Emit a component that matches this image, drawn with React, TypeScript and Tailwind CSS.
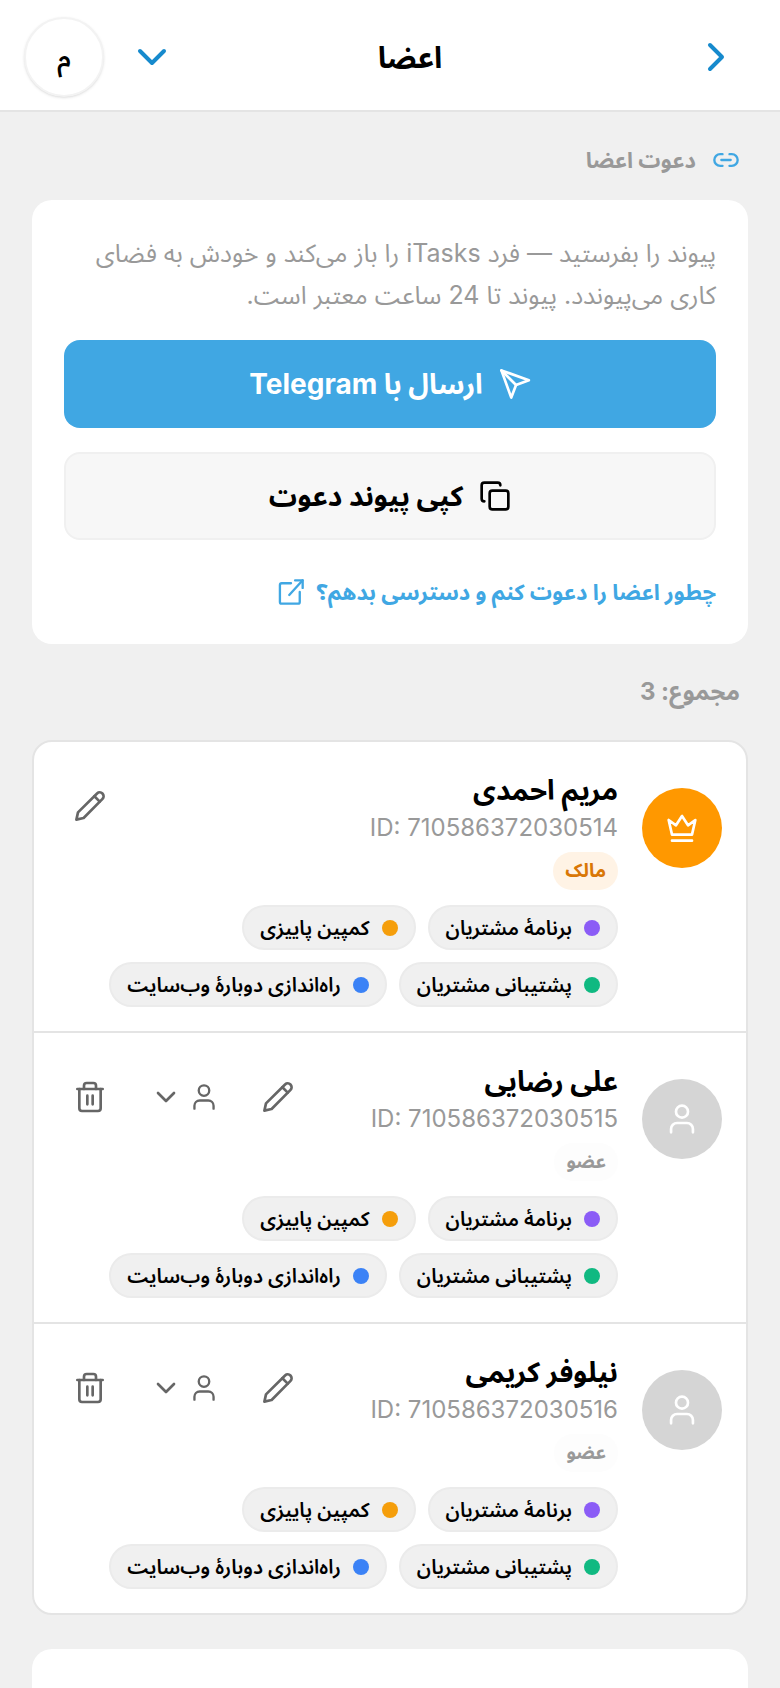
import React from "react";
import { ChevronDown, ChevronRight, Copy, Link2 } from "lucide-react";

type IconProps = { className?: string };

const iconBase = {
  viewBox: "0 0 24 24",
  fill: "none",
  stroke: "currentColor",
  strokeWidth: 2,
  strokeLinecap: "round" as const,
  strokeLinejoin: "round" as const,
};

const SendIcon = ({ className }: IconProps) => (
  <svg {...iconBase} className={className}>
    <path d="M1.8 1.8 22.4 9.2 12.8 12.8 9.2 22.2Z" />
    <path d="m1.8 1.8 11 11" />
  </svg>
);

const ExternalIcon = ({ className }: IconProps) => (
  <svg {...iconBase} className={className}>
    <path d="M12 4.5H4A1.5 1.5 0 0 0 2.5 6V20.5A1.5 1.5 0 0 0 4 22H18a1.5 1.5 0 0 0 1.5-1.5V12" />
    <path d="M15.5 2H22v6.5" />
    <path d="M22 2 10.5 14.5" />
  </svg>
);

const CrownIcon = ({ className }: IconProps) => (
  <svg {...iconBase} className={className}>
    <path d="M2 6 4.5 17h15L22 6l-5.5 4L12 3 7.5 10Z" />
    <path d="M4.5 21.5h15" />
  </svg>
);

const UserIcon = ({ className }: IconProps) => (
  <svg {...iconBase} className={className}>
    <circle cx="12" cy="6.5" r="4.5" />
    <path d="M3.8 22v-2.5A4.5 4.5 0 0 1 8.3 15h7.4a4.5 4.5 0 0 1 4.5 4.5V22" />
  </svg>
);

const PencilIcon = ({ className }: IconProps) => (
  <svg {...iconBase} className={className}>
    <path d="M1.8 22.2 3 16.800 17.3 2.6a2.9 2.9 0 0 1 4.1 4.1L7.2 21Z" />
    <path d="m15.3 4.7 4 4" />
  </svg>
);

const TrashIcon = ({ className }: IconProps) => (
  <svg {...iconBase} className={className}>
    <path d="M2.5 6h19" />
    <path d="M4 6v14.5a2 2 0 0 0 2 2h12a2 2 0 0 0 2-2V6" />
    <path d="M7.5 6V3.5a2 2 0 0 1 2-2h5a2 2 0 0 1 2 2V6" />
    <path d="M10 11v6.5M14 11v6.5" />
  </svg>
);

const projects = [
  { name: "برنامهٔ مشتریان", dot: "bg-[#8b5cf6]" },
  { name: "کمپین پاییزی", dot: "bg-[#f59e0b]" },
  { name: "پشتیبانی مشتریان", dot: "bg-[#10b981]" },
  { name: "راه‌اندازی دوبارهٔ وب‌سایت", dot: "bg-[#3b82f6]" },
];

const members = [
  { id: "710586372030514", name: "مریم احمدی", owner: true },
  { id: "710586372030515", name: "علی رضایی", owner: false },
  { id: "710586372030516", name: "نیلوفر کریمی", owner: false },
];

const Header = () => (
  <header className="flex h-28 items-center border-b-2 border-[#e4e4e4] bg-white px-6 pt-1">
    <button type="button" aria-label="بازگشت" className="flex h-16 w-20 items-center justify-center text-[#168acd]">
      <ChevronRight className="size-12" />
    </button>
    <h1 className="flex-1 ps-8 text-center text-[30px] font-bold">اعضا</h1>
    <div className="flex items-center gap-6">
      <button type="button" aria-label="فهرست" className="flex size-12 items-center justify-center text-[#168acd]">
        <ChevronDown className="size-12" />
      </button>
      <button type="button" className="size-20 rounded-full border-2 border-[#f3f3f3] bg-white text-[26px] font-semibold shadow">
        م
      </button>
    </div>
  </header>
);

const InviteCard = () => (
  <section className="rounded-[20px] bg-white p-8">
    <p className="text-[25px] leading-[42px] text-[#999999]">
      پیوند را بفرستید — فرد iTasks را باز می‌کند و خودش به فضای کاری می‌پیوندد. پیوند تا 24 ساعت معتبر است.
    </p>
    <button type="button" className="mt-6 flex h-[88px] w-full items-center justify-center gap-4 rounded-2xl bg-[#40a7e3] text-[28px] font-bold text-white">
      <SendIcon className="size-8" />
      ارسال با Telegram
    </button>
    <button type="button" className="mt-6 flex h-[88px] w-full items-center justify-center gap-4 rounded-2xl border-2 border-[#f0f0f0] bg-[#f7f7f7] text-[28px] font-bold">
      <Copy className="size-8" />
      کپی پیوند دعوت
    </button>
    <a href="#help" className="mt-8 flex h-10 items-center gap-3 text-[22px] font-bold text-[#40a7e3]">
      چطور اعضا را دعوت کنم و دسترسی بدهم؟
      <ExternalIcon className="size-7" />
    </a>
  </section>
);

const MemberRow = ({ member }: { member: (typeof members)[number] }) => (
  <li className="flex items-start gap-6 px-6 pt-[30px] pb-6">
    {member.owner ? (
      <div className="mt-4 flex size-20 shrink-0 items-center justify-center rounded-full bg-[#ff9800] text-white">
        <CrownIcon className="size-8" />
      </div>
    ) : (
      <div className="mt-4 flex size-20 shrink-0 items-center justify-center rounded-full bg-[#d5d5d5] text-white">
        <UserIcon className="size-8" />
      </div>
    )}
    <div className="min-w-0 flex-1">
      <div className="flex justify-between">
        <div>
          <h2 className="text-[28px] leading-9 font-bold">{member.name}</h2>
          <p dir="ltr" className="text-[24px] leading-10 text-[#999999]">
            ID: {member.id}
          </p>
          {member.owner ? (
            <span className="mt-1 flex h-[38px] w-fit items-center rounded-full bg-[#fff3e5] px-3 text-[19px] font-bold text-[#d97706]">
              مالک
            </span>
          ) : (
            <span className="mt-1 flex h-[38px] w-fit items-center rounded-full bg-[#fdfdfd] px-3 text-[19px] font-bold text-[#999999]">
              عضو
            </span>
          )}
        </div>
        <div className="mt-0.5 flex h-16 items-center text-[#666666]">
          <button type="button" aria-label="ویرایش" className="flex size-16 items-center justify-center">
            <PencilIcon className="size-8" />
          </button>
          {!member.owner && (
            <>
              <button type="button" aria-label="نقش" className="mx-3 flex h-16 w-[100px] items-center justify-center gap-2">
                <UserIcon className="size-7" />
                <ChevronDown className="size-8" />
              </button>
              <button type="button" aria-label="حذف" className="flex size-16 items-center justify-center">
                <TrashIcon className="size-8" />
              </button>
            </>
          )}
        </div>
      </div>
      <ul className="mt-[15px] flex flex-wrap gap-3">
        {projects.map((p) => (
          <li
            key={p.name}
            className="flex h-[45px] items-center gap-3 rounded-full border-2 border-[#ebebeb] bg-[#f0f0f0] px-4 text-[20px] font-semibold"
          >
            <span className={"size-4 rounded-full " + p.dot} />
            {p.name}
          </li>
        ))}
      </ul>
    </div>
  </li>
);

export default function App() {
  return (
    <div dir="rtl" className="min-h-screen bg-[#f0f0f0] font-['Inter','Noto_Sans_Arabic','DejaVu_Sans',sans-serif] text-black">
      <Header />
      <main className="px-8">
        <h2 className="flex h-[88px] items-center gap-4 px-2 pt-2 text-[22px] font-bold text-[#999999]">
          <Link2 className="size-7 text-[#40a7e3]" />
          دعوت اعضا
        </h2>
        <InviteCard />
        <p className="flex h-24 items-center px-2 text-[24px] font-bold text-[#999999]">مجموع: 3</p>
        <ul className="divide-y-2 divide-[#e4e4e4] overflow-hidden rounded-[20px] border-2 border-[#e4e4e4] bg-white">
          {members.map((m) => (
            <MemberRow key={m.id} member={m} />
          ))}
        </ul>
        <section className="mt-[34px] h-10 rounded-t-[20px] bg-white" />
      </main>
    </div>
  );
}
